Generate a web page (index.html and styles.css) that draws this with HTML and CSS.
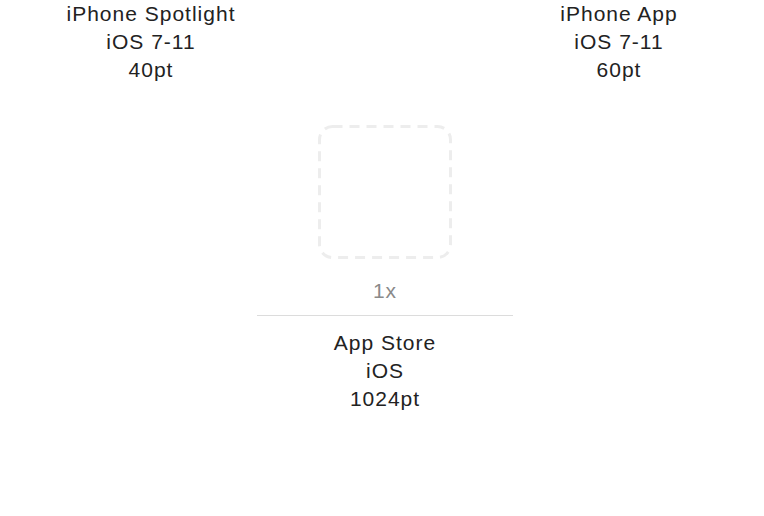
FILE: index.html
```html
<!DOCTYPE html>
<html>
<head>
<meta charset="utf-8">
<link rel="stylesheet" href="styles.css">
</head>
<body>
<div class="grid">
  <div class="slot">
    <div class="label">iPhone Spotlight<br>iOS 7-11<br>40pt</div>
  </div>
  <div class="slot"></div>
  <div class="slot">
    <div class="label">iPhone App<br>iOS 7-11<br>60pt</div>
  </div>
  <div class="slot"></div>
  <div class="slot store">
    <svg class="well" width="134" height="134" viewBox="0 0 134 134">
      <rect x="1.5" y="1.5" width="131" height="131" rx="13" ry="13" fill="none" stroke="#ededed" stroke-width="3" stroke-dasharray="10 7"/>
    </svg>
    <div class="scale">1x</div>
    <div class="rule"></div>
    <div class="label">App Store<br>iOS<br>1024pt</div>
  </div>
  <div class="slot"></div>
</div>
</body>
</html>
```
FILE: styles.css
```css
html, body {
  margin: 0;
  padding: 0;
  background: #ffffff;
}
body {
  font-family: "Liberation Sans", Arial, sans-serif;
  color: #222222;
  width: 764px;
  height: 516px;
  overflow: hidden;
}
.grid {
  display: grid;
  grid-template-columns: repeat(3, 234px);
  padding-left: 34px;
  row-gap: 41px;
}
.slot {
  display: flex;
  flex-direction: column;
  align-items: center;
}
.label {
  font-size: 21px;
  line-height: 28px;
  letter-spacing: 1px;
  text-align: center;
  white-space: nowrap;
}
.well {
  display: block;
}
.scale {
  margin-top: 18px;
  font-size: 21px;
  line-height: 28px;
  letter-spacing: 1px;
  color: #8a8a8a;
}
.rule {
  width: 256px;
  height: 1px;
  background: #dcdcdc;
  margin-top: 10px;
  margin-bottom: 13px;
  flex-shrink: 0;
}
```
